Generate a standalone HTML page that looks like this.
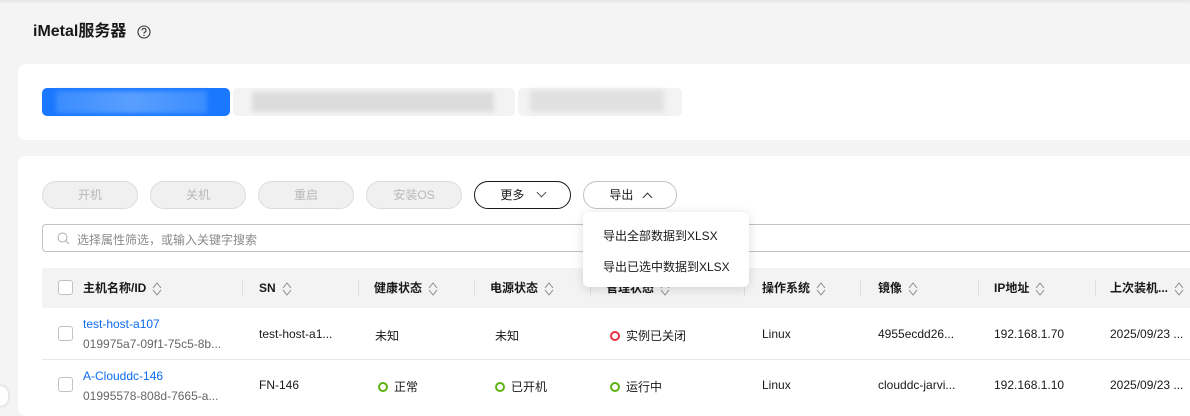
<!DOCTYPE html>
<html><head><meta charset="utf-8"><style>
*{box-sizing:border-box;margin:0;padding:0}
body{width:1190px;height:403px;overflow:hidden;background:#f4f4f4;font-family:"Liberation Sans","Noto Sans CJK SC",sans-serif;font-size:12px;color:#191919;position:relative}
.a{position:absolute}
.card{background:#fff;border-radius:8px}
.btn{position:absolute;top:181px;height:28px;border-radius:14px;border:1px solid #dcdcdc;background:#f0f0f0;color:#b8b8b8;font-size:12px;text-align:center;line-height:26px}
.th{position:absolute;top:268px;height:40px;line-height:40px;font-weight:bold;color:#191919}
.sep{position:absolute;top:280px;width:1px;height:16px;background:#dfdfdf}
.sort{display:inline-block;vertical-align:middle;margin-left:6px;width:10px;height:16px}
.cell{position:absolute;white-space:nowrap}
.dot{display:inline-block;width:10px;height:10px;border-radius:50%;border:2px solid;margin-right:6px;vertical-align:-1px}
.cb{position:absolute;width:15px;height:15px;border:1px solid #c2c2c2;border-radius:3px;background:#fff}
</style></head><body>
<div class="a" style="left:0;top:0;width:1190px;height:4px;background:linear-gradient(#e6e6e6,#f4f4f4)"></div>
<div class="a" style="left:33px;top:22px;font-size:16px;font-weight:bold;line-height:20px">iMetal服务器</div>
<svg class="a" style="left:137px;top:25px" width="14" height="14" viewBox="0 0 14 14"><circle cx="7" cy="7" r="6" fill="none" stroke="#333" stroke-width="1.1"/><path d="M5 5.4a2 2 0 1 1 2.6 1.9c-.5.2-.6.5-.6 1.2" fill="none" stroke="#333" stroke-width="1.1"/><circle cx="7" cy="10.3" r=".7" fill="#333"/></svg>
<div class="a card" style="left:18px;top:64px;width:1180px;height:76px"></div>
<div class="a" style="left:42px;top:88px;width:188px;height:28px;border-radius:5px;background:#1a78ff"><div class="a" style="left:14px;top:3px;width:151px;height:22px;background:linear-gradient(90deg,#3a8cff,#5a9fff,#3a8cff);filter:blur(2px)"></div></div>
<div class="a" style="left:233px;top:88px;width:282px;height:28px;border-radius:5px;background:#f3f3f3"><div class="a" style="left:19px;top:4px;width:242px;height:20px;background:#dcdcdc;filter:blur(2px)"></div></div>
<div class="a" style="left:518px;top:88px;width:164px;height:28px;border-radius:5px;background:#f3f3f3"><div class="a" style="left:12px;top:2px;width:134px;height:22px;background:#e0e0e0;filter:blur(3px)"></div></div>
<div class="a card" style="left:18px;top:156px;width:1180px;height:260px"></div>
<div class="btn" style="left:42px;width:96px">开机</div>
<div class="btn" style="left:150px;width:96px">关机</div>
<div class="btn" style="left:258px;width:96px">重启</div>
<div class="btn" style="left:366px;width:96px">安装OS</div>
<div class="btn" style="left:474px;width:97px;background:#fff;border-color:#191919;color:#191919">更多 <span style="display:inline-block;width:7px;height:7px;border-right:1.2px solid #555;border-bottom:1.2px solid #555;transform:rotate(45deg);margin:0 0 3px 10px"></span></div>
<div class="btn" style="left:583px;width:94px;background:#fff;border-color:#c2c2c2;color:#191919">导出 <span style="display:inline-block;width:7px;height:7px;border-left:1.2px solid #333;border-top:1.2px solid #333;transform:rotate(45deg);margin:0 0 -2px 7px"></span></div>
<div class="a" style="left:42px;top:224px;width:1160px;height:28px;border:1px solid #c2c2c2;border-radius:4px;background:#fff"></div>
<svg class="a" style="left:57px;top:232px" width="13" height="13" viewBox="0 0 13 13"><circle cx="5.5" cy="5.5" r="4.5" fill="none" stroke="#aaa" stroke-width="1"/><path d="M9 9l3 3" stroke="#aaa"/></svg>
<div class="a" style="left:77px;top:231px;color:#8a8a8a">选择属性筛选，或输入关键字搜索</div>
<div class="a" style="left:42px;top:268px;width:1160px;height:40px;background:#f3f3f3"></div>
<div class="cb" style="left:58px;top:280px"></div>
<div class="th" style="left:83px">主机名称/ID<svg class="sort" viewBox="0 0 10 16"><path d="M1 7l4-5 4 5M1 9l4 5 4-5" fill="none" stroke="#8a8a8a"/></svg></div>
<div class="sep" style="left:242px"></div>
<div class="th" style="left:259px">SN<svg class="sort" viewBox="0 0 10 16"><path d="M1 7l4-5 4 5M1 9l4 5 4-5" fill="none" stroke="#8a8a8a"/></svg></div>
<div class="sep" style="left:358px"></div>
<div class="th" style="left:374px">健康状态<svg class="sort" viewBox="0 0 10 16"><path d="M1 7l4-5 4 5M1 9l4 5 4-5" fill="none" stroke="#8a8a8a"/></svg></div>
<div class="sep" style="left:474px"></div>
<div class="th" style="left:490px">电源状态<svg class="sort" viewBox="0 0 10 16"><path d="M1 7l4-5 4 5M1 9l4 5 4-5" fill="none" stroke="#8a8a8a"/></svg></div>
<div class="sep" style="left:590px"></div>
<div class="th" style="left:606px">管理状态<svg class="sort" viewBox="0 0 10 16"><path d="M1 7l4-5 4 5M1 9l4 5 4-5" fill="none" stroke="#8a8a8a"/></svg></div>
<div class="sep" style="left:744px"></div>
<div class="th" style="left:762px">操作系统<svg class="sort" viewBox="0 0 10 16"><path d="M1 7l4-5 4 5M1 9l4 5 4-5" fill="none" stroke="#8a8a8a"/></svg></div>
<div class="sep" style="left:860px"></div>
<div class="th" style="left:878px">镜像<svg class="sort" viewBox="0 0 10 16"><path d="M1 7l4-5 4 5M1 9l4 5 4-5" fill="none" stroke="#8a8a8a"/></svg></div>
<div class="sep" style="left:978px"></div>
<div class="th" style="left:994px">IP地址<svg class="sort" viewBox="0 0 10 16"><path d="M1 7l4-5 4 5M1 9l4 5 4-5" fill="none" stroke="#8a8a8a"/></svg></div>
<div class="sep" style="left:1095px"></div>
<div class="th" style="left:1110px">上次装机...<svg class="sort" viewBox="0 0 10 16"><path d="M1 7l4-5 4 5M1 9l4 5 4-5" fill="none" stroke="#8a8a8a"/></svg></div>
<div class="a" style="left:42px;top:359px;width:1160px;height:1px;background:#e8e8e8"></div>
<div class="cb" style="left:58px;top:326px"></div>
<div class="cell" style="left:83px;top:317px;color:#0b6bf0">test-host-a107</div>
<div class="cell" style="left:83px;top:337px;color:#666">019975a7-09f1-75c5-8b...</div>
<div class="cell" style="left:259px;top:327px">test-host-a1...</div>
<div class="cell" style="left:375px;top:327px">未知</div>
<div class="cell" style="left:495px;top:327px">未知</div>
<div class="cell" style="left:610px;top:327px"><span class="dot" style="border-color:#e8303e"></span>实例已关闭</div>
<div class="cell" style="left:762px;top:327px">Linux</div>
<div class="cell" style="left:878px;top:327px">4955ecdd26...</div>
<div class="cell" style="left:994px;top:327px">192.168.1.70</div>
<div class="cell" style="left:1110px;top:327px">2025/09/23 ...</div>
<div class="cb" style="left:58px;top:377px"></div>
<div class="cell" style="left:83px;top:369px;color:#0b6bf0">A-Clouddc-146</div>
<div class="cell" style="left:83px;top:389px;color:#666">01995578-808d-7665-a...</div>
<div class="cell" style="left:259px;top:378px">FN-146</div>
<div class="cell" style="left:378px;top:378px"><span class="dot" style="border-color:#5db312"></span>正常</div>
<div class="cell" style="left:495px;top:378px"><span class="dot" style="border-color:#5db312"></span>已开机</div>
<div class="cell" style="left:610px;top:378px"><span class="dot" style="border-color:#5db312"></span>运行中</div>
<div class="cell" style="left:762px;top:378px">Linux</div>
<div class="cell" style="left:878px;top:378px">clouddc-jarvi...</div>
<div class="cell" style="left:994px;top:378px">192.168.1.10</div>
<div class="cell" style="left:1110px;top:378px">2025/09/23 ...</div>
<div class="a" style="left:583px;top:212px;width:166px;height:75px;background:#fff;border-radius:6px;box-shadow:0 2px 10px rgba(0,0,0,.14)">
<div class="a" style="left:20px;top:15px">导出全部数据到XLSX</div>
<div class="a" style="left:20px;top:46px">导出已选中数据到XLSX</div>
</div>
<div class="a" style="left:-8px;top:386px;width:16px;height:20px;border-radius:8px;background:#fff;box-shadow:0 0 3px rgba(0,0,0,.2)"></div>
</body></html>
